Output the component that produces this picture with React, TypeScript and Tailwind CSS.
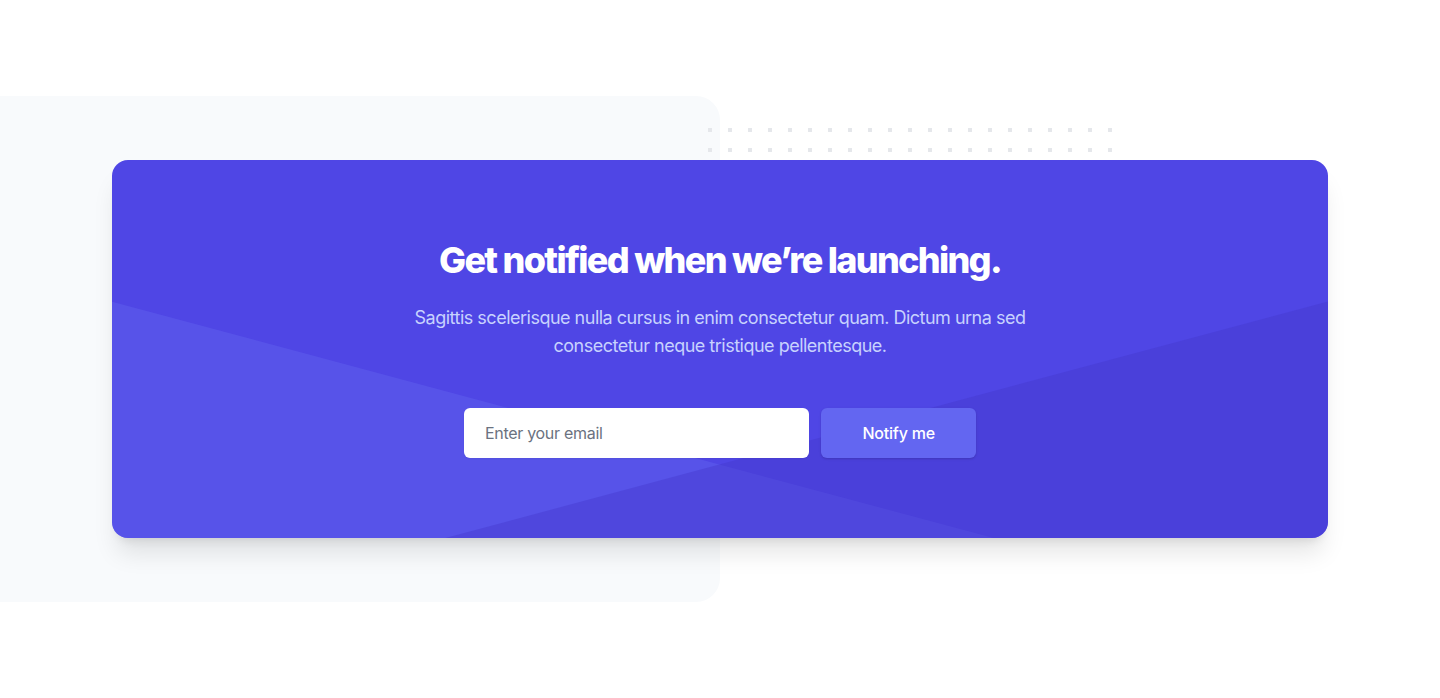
import { useState } from 'react'

function Dots() {
    return (
        <svg className="absolute top-8 left-1/2 -ml-3" width="404" height="392" fill="none" viewBox="0 0 404 392">
            <defs>
                <pattern id="cta-dots" x="0" y="0" width="20" height="20" patternUnits="userSpaceOnUse">
                    <rect x="0" y="0" width="4" height="4" fill="#e5e7eb" />
                </pattern>
            </defs>
            <rect width="404" height="392" fill="url(#cta-dots)" />
        </svg>
    )
}

export default function App() {
    const [email, setEmail] = useState('')

    return (
        <div className="min-h-screen bg-white pt-24 font-['Inter',sans-serif] antialiased">
            <div className="relative py-16">
                <div aria-hidden="true">
                    <div className="absolute inset-y-0 left-0 w-1/2 bg-[#f8fafc] rounded-r-3xl" />
                    <Dots />
                </div>

                <div className="mx-auto max-w-7xl px-8">
                    <div className="relative rounded-2xl px-12 py-20 bg-[#4f46e5] overflow-hidden shadow-[0_20px_25px_-5px_rgba(0,0,0,0.1),0_8px_10px_-6px_rgba(0,0,0,0.1)]">
                        <div aria-hidden="true" className="absolute inset-0">
                            <svg
                                className="absolute inset-0 h-full w-full"
                                preserveAspectRatio="xMidYMid slice"
                                fill="none"
                                viewBox="0 0 1463 360"
                            >
                                <path fill="#6366f1" fillOpacity="0.4" d="M-82.673 72l1761.849 472.086-134.327 501.315-1761.85-472.086z" />
                                <path fill="#4338ca" fillOpacity="0.4" d="M-217.088 544.086L1544.761 72l134.327 501.316-1761.849 472.086z" />
                            </svg>
                        </div>

                        <div className="relative">
                            <div className="text-center">
                                <h2 className="text-4xl font-extrabold text-white tracking-[-1.7px]">
                                    Get notified when we’re launching.
                                </h2>
                                <p className="mt-6 mx-auto max-w-2xl text-lg text-[#c7d2fe] tracking-[-0.5px]">
                                    Sagittis scelerisque nulla cursus in enim consectetur quam. Dictum urna sed consectetur neque tristique pellentesque.
                                </p>
                            </div>
                            <form onSubmit={(e) => e.preventDefault()} className="mt-12 mx-auto max-w-lg flex">
                                <div className="min-w-0 flex-1">
                                    <label htmlFor="cta-email" className="sr-only">Email address</label>
                                    <input
                                        id="cta-email"
                                        type="email"
                                        value={email}
                                        onChange={(e) => setEmail(e.target.value)}
                                        placeholder="Enter your email"
                                        className="block w-full h-[50px] bg-white border border-transparent rounded-md px-5 text-base leading-6 tracking-[-0.3px] text-[#111827] placeholder:text-[#6b7280] shadow-[0_1px_2px_0_rgba(0,0,0,0.05)] outline-none"
                                    />
                                </div>
                                <div className="ml-3">
                                    <button
                                        type="submit"
                                        className="block w-full h-[50px] rounded-md border border-transparent px-10 bg-[#6366f1] text-base font-medium tracking-[-0.2px] text-white shadow-[0_1px_3px_0_rgba(0,0,0,0.1),0_1px_2px_0_rgba(0,0,0,0.06)] hover:bg-[#818cf8]"
                                    >
                                        Notify me
                                    </button>
                                </div>
                            </form>
                        </div>
                    </div>
                </div>
            </div>
        </div>
    )
}
